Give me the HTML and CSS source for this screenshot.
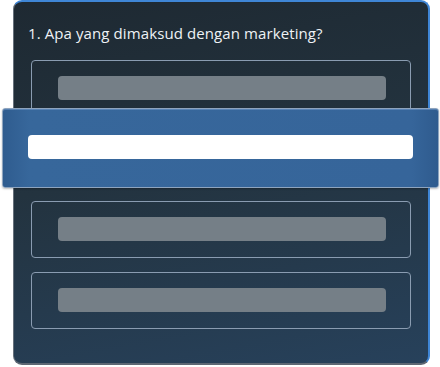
FILE: index.html
```html
<!DOCTYPE html>
<html lang="en">
<head>
    <meta charset="UTF-8">
    <meta name="viewport" content="width=device-width, initial-scale=1.0">
    <title>Quiz</title>
    <link rel="stylesheet" href="styles.css">
</head>
<body>
    <div class="quiz-card">
        <h2 class="question-title">1. Apa yang dimaksud dengan marketing?</h2>

        <div class="options">
            <div class="option">
                <div class="option-bar"></div>
            </div>
            <div class="option selected">
                <div class="option-bar"></div>
            </div>
            <div class="option">
                <div class="option-bar"></div>
            </div>
            <div class="option">
                <div class="option-bar"></div>
            </div>
        </div>
    </div>
</body>
</html>
```

FILE: styles.css
```css
* {
    margin: 0;
    padding: 0;
    box-sizing: border-box;
}

body {
    font-family: 'Open Sans', 'Noto Sans', sans-serif;
    background-color: white;
    width: 440px;
    height: 367px;
    overflow: hidden;
}

/* Card */
.quiz-card {
    margin-left: 13px;
    width: 417px;
    height: 365px;
    padding: 21px 17px 0 17px;
    background: linear-gradient(170deg, #1e2932 0%, #23333f 45%, #27415b 100%);
    border-top: 2px solid #3f86d6;
    border-right: 2px solid #3f86d6;
    border-left: 1px solid #66707b;
    border-bottom: 2px solid #5d6773;
    border-radius: 9px;
}

.question-title {
    font-size: 15px;
    font-weight: 400;
    line-height: 20px;
    color: #eef2f5;
    margin: 0 0 17px -3px;
    letter-spacing: 0.1px;
}

/* Options */
.options {
    display: flex;
    flex-direction: column;
    gap: 14px;
}

.option {
    height: 57px;
    padding: 15px 24.5px 0 25.5px;
    border: 1.5px solid #8a9cb1;
    border-radius: 4px;
}

.option-bar {
    height: 24px;
    background-color: #757f87;
    border-radius: 4px;
}

.option.selected {
    position: relative;
    z-index: 1;
    height: 80px;
    margin: -23px -28px -1px -29px;
    padding: 26px 25px 0 25px;
    background: linear-gradient(90deg, #2f5c8f 0%, #37679b 6%, #36659a 94%, #2f5b8e 100%);
    border: 1px solid #8ea4be;
    border-radius: 3px;
    box-shadow: inset 0 1px 0 rgba(120, 160, 210, 0.5), 0 1px 2px rgba(0, 0, 0, 0.25);
}

.option.selected .option-bar {
    background-color: #ffffff;
}
```
